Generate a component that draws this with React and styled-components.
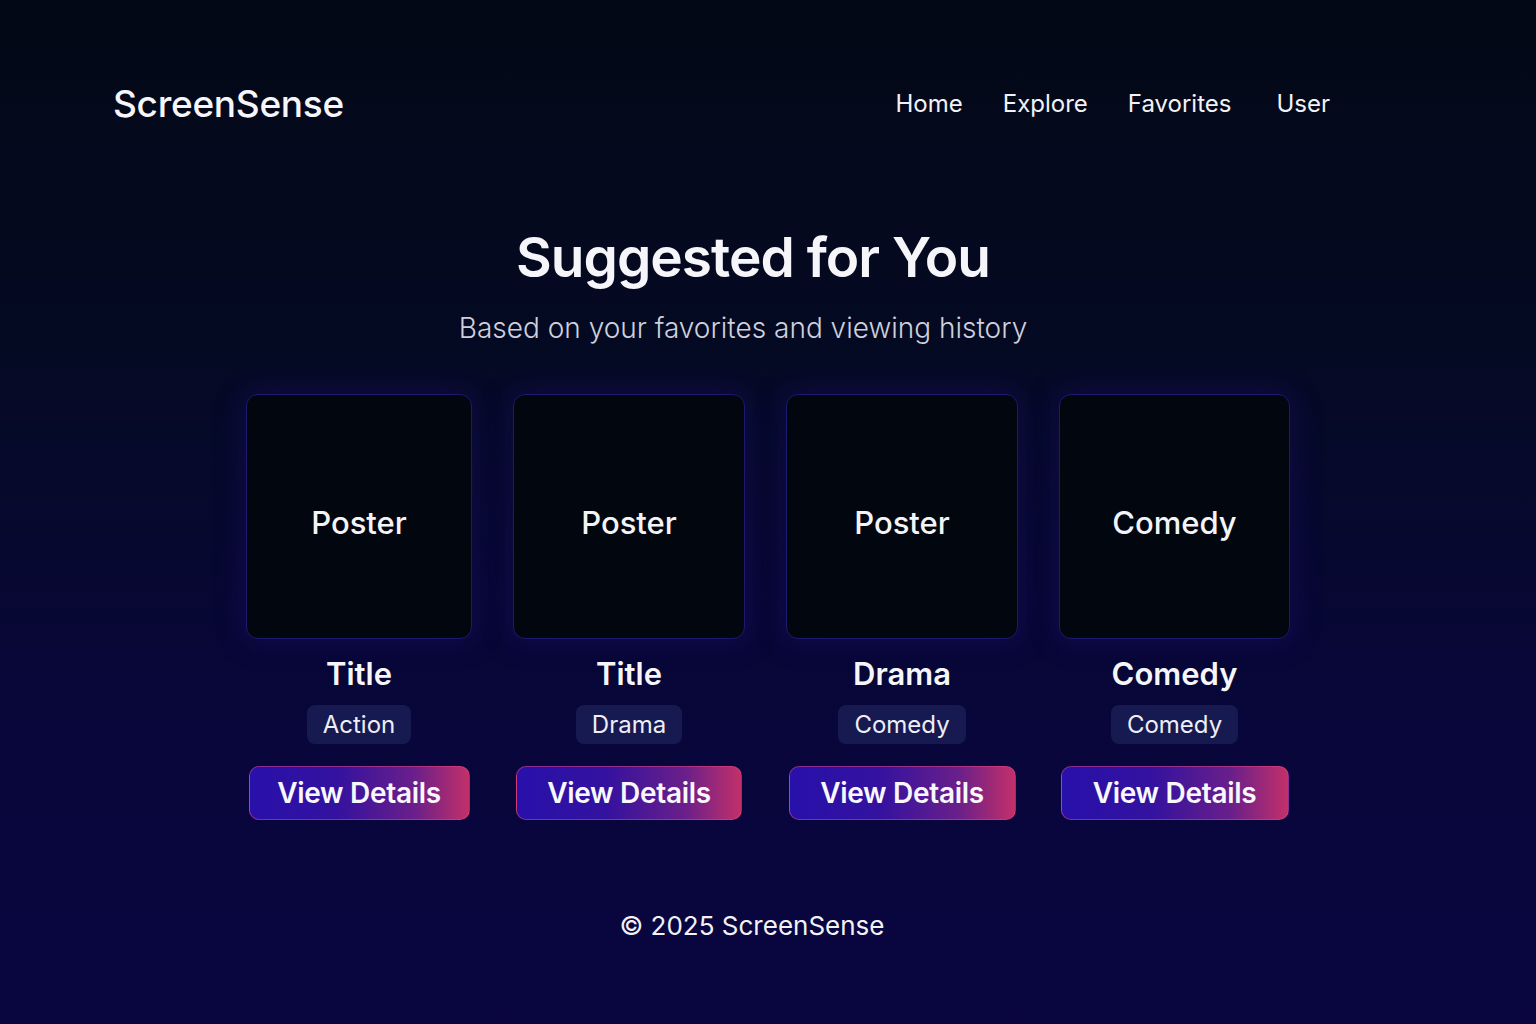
import React from 'react'
import styled, { createGlobalStyle } from 'styled-components'

const GlobalStyle = createGlobalStyle`
  html, body {
    margin: 0;
    padding: 0;
  }
  body {
    font-family: Inter, "Noto Sans", sans-serif;
    color: #f4f4f8;
    background: #030816;
  }
`

const Page = styled.div`
  width: 1536px;
  height: 1024px;
  box-sizing: border-box;
  background: linear-gradient(180deg, #030816 0%, #050a24 35%, #08063a 70%, #0a0540 100%);
  display: flex;
  flex-direction: column;
  align-items: center;
  overflow: hidden;
`

const Header = styled.header`
  width: 100%;
  box-sizing: border-box;
  display: flex;
  align-items: center;
  justify-content: space-between;
  padding: 80px 206px 0 113px;
  height: 126px;
`

const Logo = styled.div`
  font-size: 37px;
  font-weight: 500;
  letter-spacing: -0.3px;
  color: #f6f6fa;
`

const Nav = styled.nav`
  display: flex;
  gap: 40px;
`

const NavLink = styled.a`
  font-size: 24px;
  font-weight: 400;
  color: #f2f2f6;
  text-decoration: none;
  margin-left: ${p => p.$extra || 0}px;
`

const Heading = styled.h1`
  margin: 98px 30px 0 0;
  font-size: 55px;
  font-weight: 600;
  letter-spacing: -1px;
  line-height: 66px;
  color: #f6f6fa;
`

const Subheading = styled.p`
  margin: 20px 50px 0 0;
  font-size: 28px;
  font-weight: 300;
  line-height: 36px;
  color: #cfd0dc;
`

const Grid = styled.div`
  margin-top: 48px;
  display: flex;
  gap: 41px;
`

const Card = styled.div`
  width: ${p => p.$w}px;
  display: flex;
  flex-direction: column;
  align-items: center;
`

const Poster = styled.div`
  width: 100%;
  height: 245px;
  box-sizing: border-box;
  border: 1px solid #1c1a70;
  border-radius: 12px;
  background: #02060f;
  box-shadow: 0 0 28px 4px rgba(40, 20, 150, 0.25);
  display: flex;
  align-items: center;
  justify-content: center;
  padding-top: 11px;
  font-size: 31px;
  font-weight: 500;
  color: #f4f4f8;
`

const Title = styled.div`
  margin-top: 16px;
  font-size: 31px;
  font-weight: 600;
  line-height: 38px;
  color: #f6f6fa;
`

const Tag = styled.span`
  margin-top: 12px;
  height: 39px;
  box-sizing: border-box;
  padding: 0 16px;
  display: flex;
  align-items: center;
  border-radius: 8px;
  background: #171a50;
  font-size: 24px;
  font-weight: 400;
  color: #eeeef6;
`

const Button = styled.button`
  margin-top: 22px;
  width: ${p => p.$w}px;
  height: 54px;
  border-radius: 10px;
  border: 1px solid rgba(220, 70, 130, 0.55);
  background: linear-gradient(90deg, #2810aa 0%, #34129f 40%, #6a1f8a 75%, #c2306a 100%);
  font-family: Inter, "Noto Sans", sans-serif;
  font-size: 28px;
  font-weight: 600;
  letter-spacing: -0.3px;
  color: #f8f8fc;
  cursor: pointer;
`

const Footer = styled.footer`
  margin: 90px 32px 0 0;
  font-size: 26px;
  font-weight: 400;
  color: #f2f2f6;
`

const movies = [
  { poster: 'Poster', title: 'Title', tag: 'Action', w: 226, bw: 221 },
  { poster: 'Poster', title: 'Title', tag: 'Drama', w: 232, bw: 226 },
  { poster: 'Poster', title: 'Drama', tag: 'Comedy', w: 232, bw: 227 },
  { poster: 'Comedy', title: 'Comedy', tag: 'Comedy', w: 231, bw: 228 },
]

export default function App() {
  return (
    <Page>
      <GlobalStyle />
      <Header>
        <Logo>ScreenSense</Logo>
        <Nav>
          <NavLink href="#">Home</NavLink>
          <NavLink href="#">Explore</NavLink>
          <NavLink href="#">Favorites</NavLink>
          <NavLink href="#" $extra={5}>User</NavLink>
        </Nav>
      </Header>
      <Heading>Suggested for You</Heading>
      <Subheading>Based on your favorites and viewing history</Subheading>
      <Grid>
        {movies.map((m, i) => (
          <Card key={i} $w={m.w}>
            <Poster>{m.poster}</Poster>
            <Title>{m.title}</Title>
            <Tag>{m.tag}</Tag>
            <Button $w={m.bw}>View Details</Button>
          </Card>
        ))}
      </Grid>
      <Footer>© 2025 ScreenSense</Footer>
    </Page>
  )
}
